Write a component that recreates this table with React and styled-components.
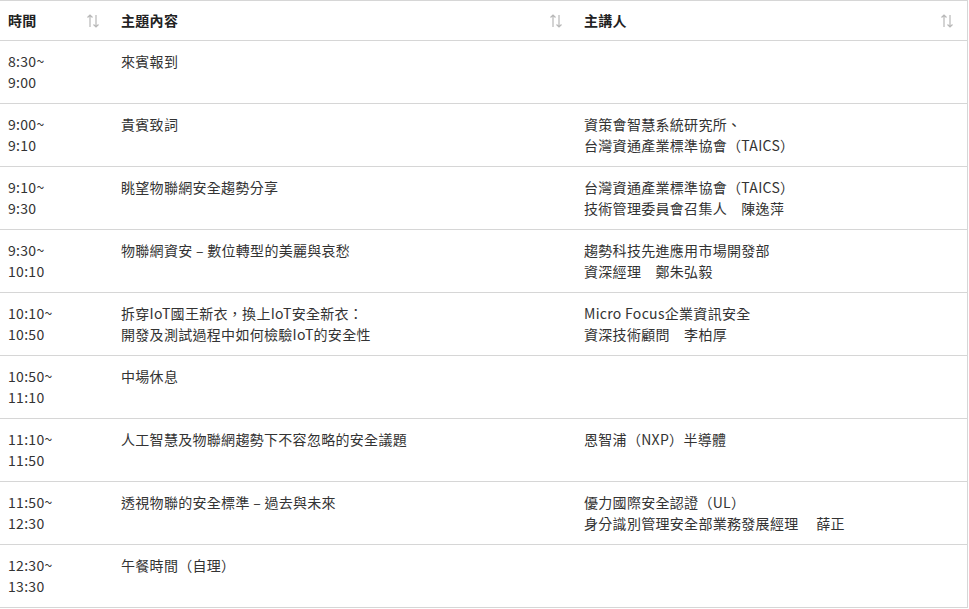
import styled, { createGlobalStyle } from "styled-components";

const GlobalStyle = createGlobalStyle`
  body {
    margin: 0;
    background: #fff;
    font-family: "Noto Sans CJK TC", "Noto Sans", sans-serif;
  }
`;

const TableStyled = styled.div`
  width: 968px;
  display: grid;
  grid-template-columns: 113px 463px 1fr;
  border-top: 1px solid #d6d6d6;
  border-right: 1px solid #d6d6d6;
  box-sizing: border-box;
  font-size: 14px;
  line-height: 21px;
  letter-spacing: 0.3px;
  color: #333;
`;

const HeadCell = styled.div`
  display: flex;
  align-items: center;
  justify-content: space-between;
  padding: 9px 13px 9px 8px;
  border-bottom: 1px solid #d6d6d6;
  font-weight: 700;
  color: #222;
`;

const Cell = styled.div`
  padding: 10px 8px 10px 8px;
  border-bottom: 1px solid #d6d6d6;
  white-space: pre-line;
  min-height: 42px;
`;

const SortIcon = () => (
  <svg width="14" height="16" viewBox="0 0 14 16" fill="none" stroke="#b8b8b8" strokeWidth="1.2">
    <path d="M4 14V2M1.5 4.5L4 2l2.5 2.5" />
    <path d="M10 2v12M7.5 11.5L10 14l2.5-2.5" />
  </svg>
);

const columns = ["時間", "主題內容", "主講人"];

const rows = [
  ["8:30~\n9:00", "來賓報到", ""],
  ["9:00~\n9:10", "貴賓致詞", "資策會智慧系統研究所、\n台灣資通產業標準協會（TAICS）"],
  ["9:10~\n9:30", "眺望物聯網安全趨勢分享", "台灣資通產業標準協會（TAICS）\n技術管理委員會召集人\u3000陳逸萍"],
  ["9:30~\n10:10", "物聯網資安 – 數位轉型的美麗與哀愁", "趨勢科技先進應用市場開發部\n資深經理\u3000鄭朱弘毅"],
  ["10:10~\n10:50", "拆穿IoT國王新衣，換上IoT安全新衣：\n開發及測試過程中如何檢驗IoT的安全性", "Micro Focus企業資訊安全\n資深技術顧問\u3000李柏厚"],
  ["10:50~\n11:10", "中場休息", ""],
  ["11:10~\n11:50", "人工智慧及物聯網趨勢下不容忽略的安全議題", "恩智浦（NXP）半導體"],
  ["11:50~\n12:30", "透視物聯的安全標準 – 過去與未來", "優力國際安全認證（UL）\n身分識別管理安全部業務發展經理\u3000  薛正"],
  ["12:30~\n13:30", "午餐時間（自理）", ""],
];

const App = () => {
  return (
    <>
      <GlobalStyle />
      <TableStyled>
        {columns.map((c) => (
          <HeadCell key={c}>
            <span>{c}</span>
            <SortIcon />
          </HeadCell>
        ))}
        {rows.map((r, i) =>
          r.map((text, j) => <Cell key={`${i}-${j}`}>{text}</Cell>)
        )}
      </TableStyled>
    </>
  );
};

export default App;
